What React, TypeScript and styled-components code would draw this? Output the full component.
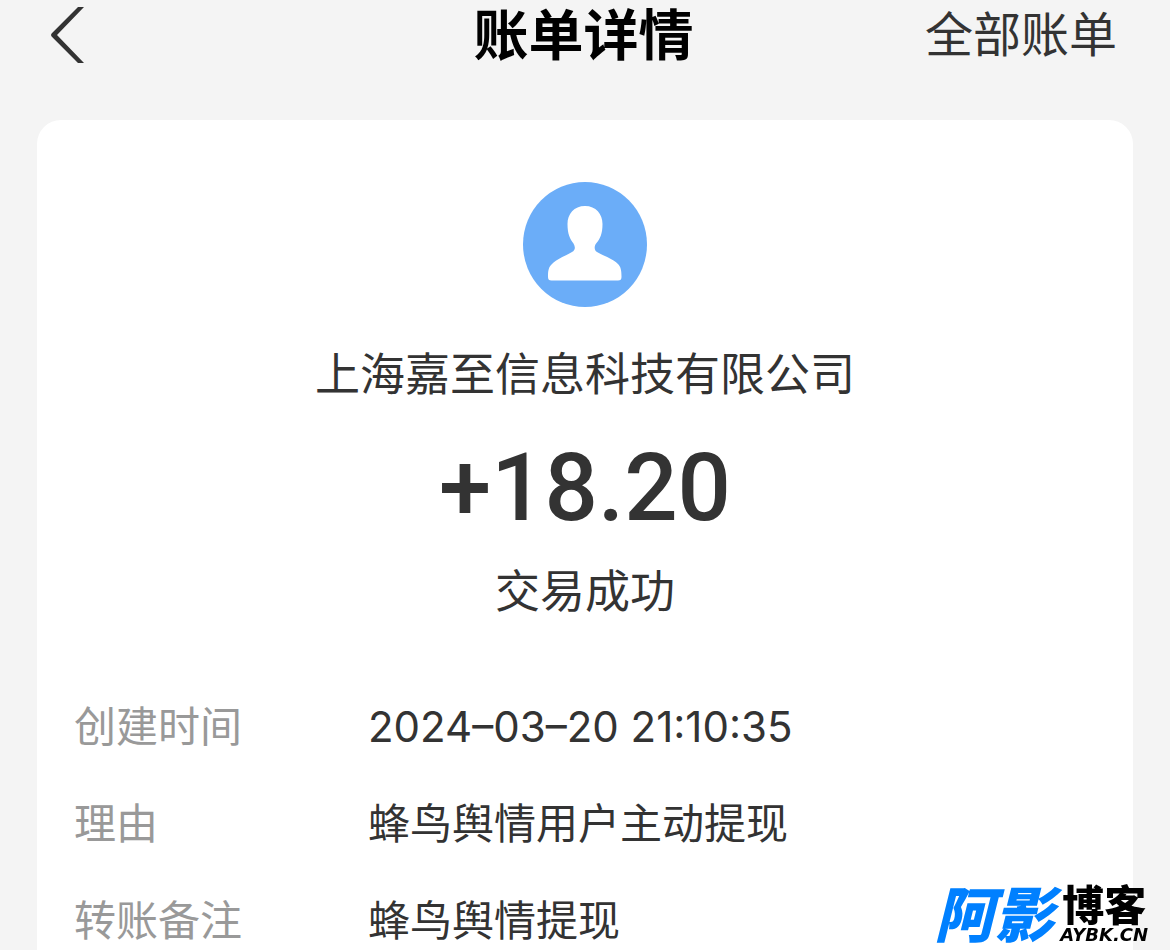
import React from "react";
import styled, { createGlobalStyle } from "styled-components";

const cjk = `"Noto Sans CJK SC", sans-serif`;

const GlobalStyle = createGlobalStyle`
  * { box-sizing: border-box; }
  body {
    margin: 0;
    background: #f4f4f4;
    color: #333333;
    font-family: ${cjk};
  }
`;

const Page = styled.div`
  display: flex;
  flex-direction: column;
  min-height: 100vh;
`;

const Header = styled.header`
  display: grid;
  grid-template-columns: 1fr auto 1fr;
  align-items: start;
  margin-bottom: 58px;
  padding: 0 53px 0 50px;
  line-height: 62px;
`;

const BackButton = styled.button`
  justify-self: start;
  display: flex;
  padding: 7px 0 0;
  height: 62px;
  border: 0;
  background: none;
  color: inherit;
  cursor: pointer;
`;

const BackIcon = styled.svg`
  flex: none;
`;

const Title = styled.h1`
  margin: 0;
  color: #000000;
  font-size: 55px;
  font-weight: 700;
`;

const AllBillsLink = styled.a`
  justify-self: end;
  color: inherit;
  font-size: 48px;
  text-decoration: none;
`;

const Card = styled.main`
  flex: 1;
  margin: 0 37px;
  padding: 62px 37px 0;
  border-radius: 24px 24px 0 0;
  background: #ffffff;
`;

const Summary = styled.section`
  display: flex;
  flex-direction: column;
  align-items: center;
  margin-bottom: 73px;
`;

const SummaryText = styled.p`
  margin: 0;
  font-size: 45px;
  line-height: 64px;
`;

const Company = styled(SummaryText)`
  margin-top: 33px;
`;

const Amount = styled.p`
  margin: 36px 0 21px;
  font-family: Roboto, sans-serif;
  font-size: 94px;
  font-weight: 500;
  line-height: 96px;
`;

const Details = styled.dl`
  display: flex;
  flex-direction: column;
  gap: 37px;
  margin: 0;
`;

const DetailRow = styled.div`
  display: grid;
  grid-template-columns: 294px 1fr;
  font-size: 42px;
  line-height: 60px;
`;

const Label = styled.dt`
  color: #999999;
`;

const Value = styled.dd`
  margin: 0;
`;

const Timestamp = styled.time`
  font-family: Inter, sans-serif;
  line-height: 1;
`;

const Watermark = styled.aside`
  position: fixed;
  right: 22px;
  bottom: 8px;
  display: flex;
  align-items: flex-end;
  font-weight: 900;
  white-space: nowrap;
`;

const WatermarkLead = styled.span`
  padding-right: 6px;
  color: #0080ff;
  font-size: 60px;
  font-style: italic;
  line-height: 62px;
`;

const WatermarkTail = styled.span`
  display: flex;
  flex-direction: column;
  align-items: center;
  gap: 12px;
  color: #000000;
`;

const WatermarkName = styled.span`
  font-size: 42px;
  line-height: 26px;
`;

const WatermarkDomain = styled.span`
  font-family: "DejaVu Sans", sans-serif;
  font-size: 18px;
  font-style: italic;
  line-height: 14px;
`;

const rows = [
  { label: "创建时间", value: <Timestamp>2024–03–20 21:10:35</Timestamp> },
  { label: "理由", value: "蜂鸟舆情用户主动提现" },
  { label: "转账备注", value: "蜂鸟舆情提现" },
];

export default function App() {
  return (
    <>
      <GlobalStyle />
      <Page>
        <Header>
          <BackButton type="button" aria-label="返回">
            <BackIcon width="36" height="56" viewBox="0 0 36 56" fill="currentColor">
              <path d="M28 0H34L7 28L34 56H28L1.6 29.4Q.4 28 1.6 26.6Z" />
            </BackIcon>
          </BackButton>
          <Title>账单详情</Title>
          <AllBillsLink href="#bills">全部账单</AllBillsLink>
        </Header>
        <Card>
          <Summary>
            <svg width="124" height="125" viewBox="0 0 124 125" aria-hidden="true">
              <ellipse cx="62" cy="62.5" rx="62" ry="62.5" fill="#6badf8" />
              <path
                fill="#ffffff"
                d="M62 24C73 24 79.500 32 79.500 42C79.500 52 77 57 73.500 61C71 64 71 68 74 70C80 74 89 76 95 82C98 85 98.500 89 98.500 95C98.500 97.500 97.500 98.500 95 98.500H28.500C26 98.500 25 97.500 25 95C25 89 25.500 85 29 82C35 76 43 74 49 70C52.500 68 52.500 65 50.500 61.500C47 57 44.500 52 44.500 42C44.500 32 51 24 62 24Z"
              />
            </svg>
            <Company>上海嘉至信息科技有限公司</Company>
            <Amount>+18.20</Amount>
            <SummaryText>交易成功</SummaryText>
          </Summary>
          <Details>
            {rows.map((row) => (
              <DetailRow key={row.label}>
                <Label>{row.label}</Label>
                <Value>{row.value}</Value>
              </DetailRow>
            ))}
          </Details>
        </Card>
      </Page>
      <Watermark>
        <WatermarkLead>阿影</WatermarkLead>
        <WatermarkTail>
          <WatermarkName>博客</WatermarkName>
          <WatermarkDomain>AYBK.CN</WatermarkDomain>
        </WatermarkTail>
      </Watermark>
    </>
  );
}
